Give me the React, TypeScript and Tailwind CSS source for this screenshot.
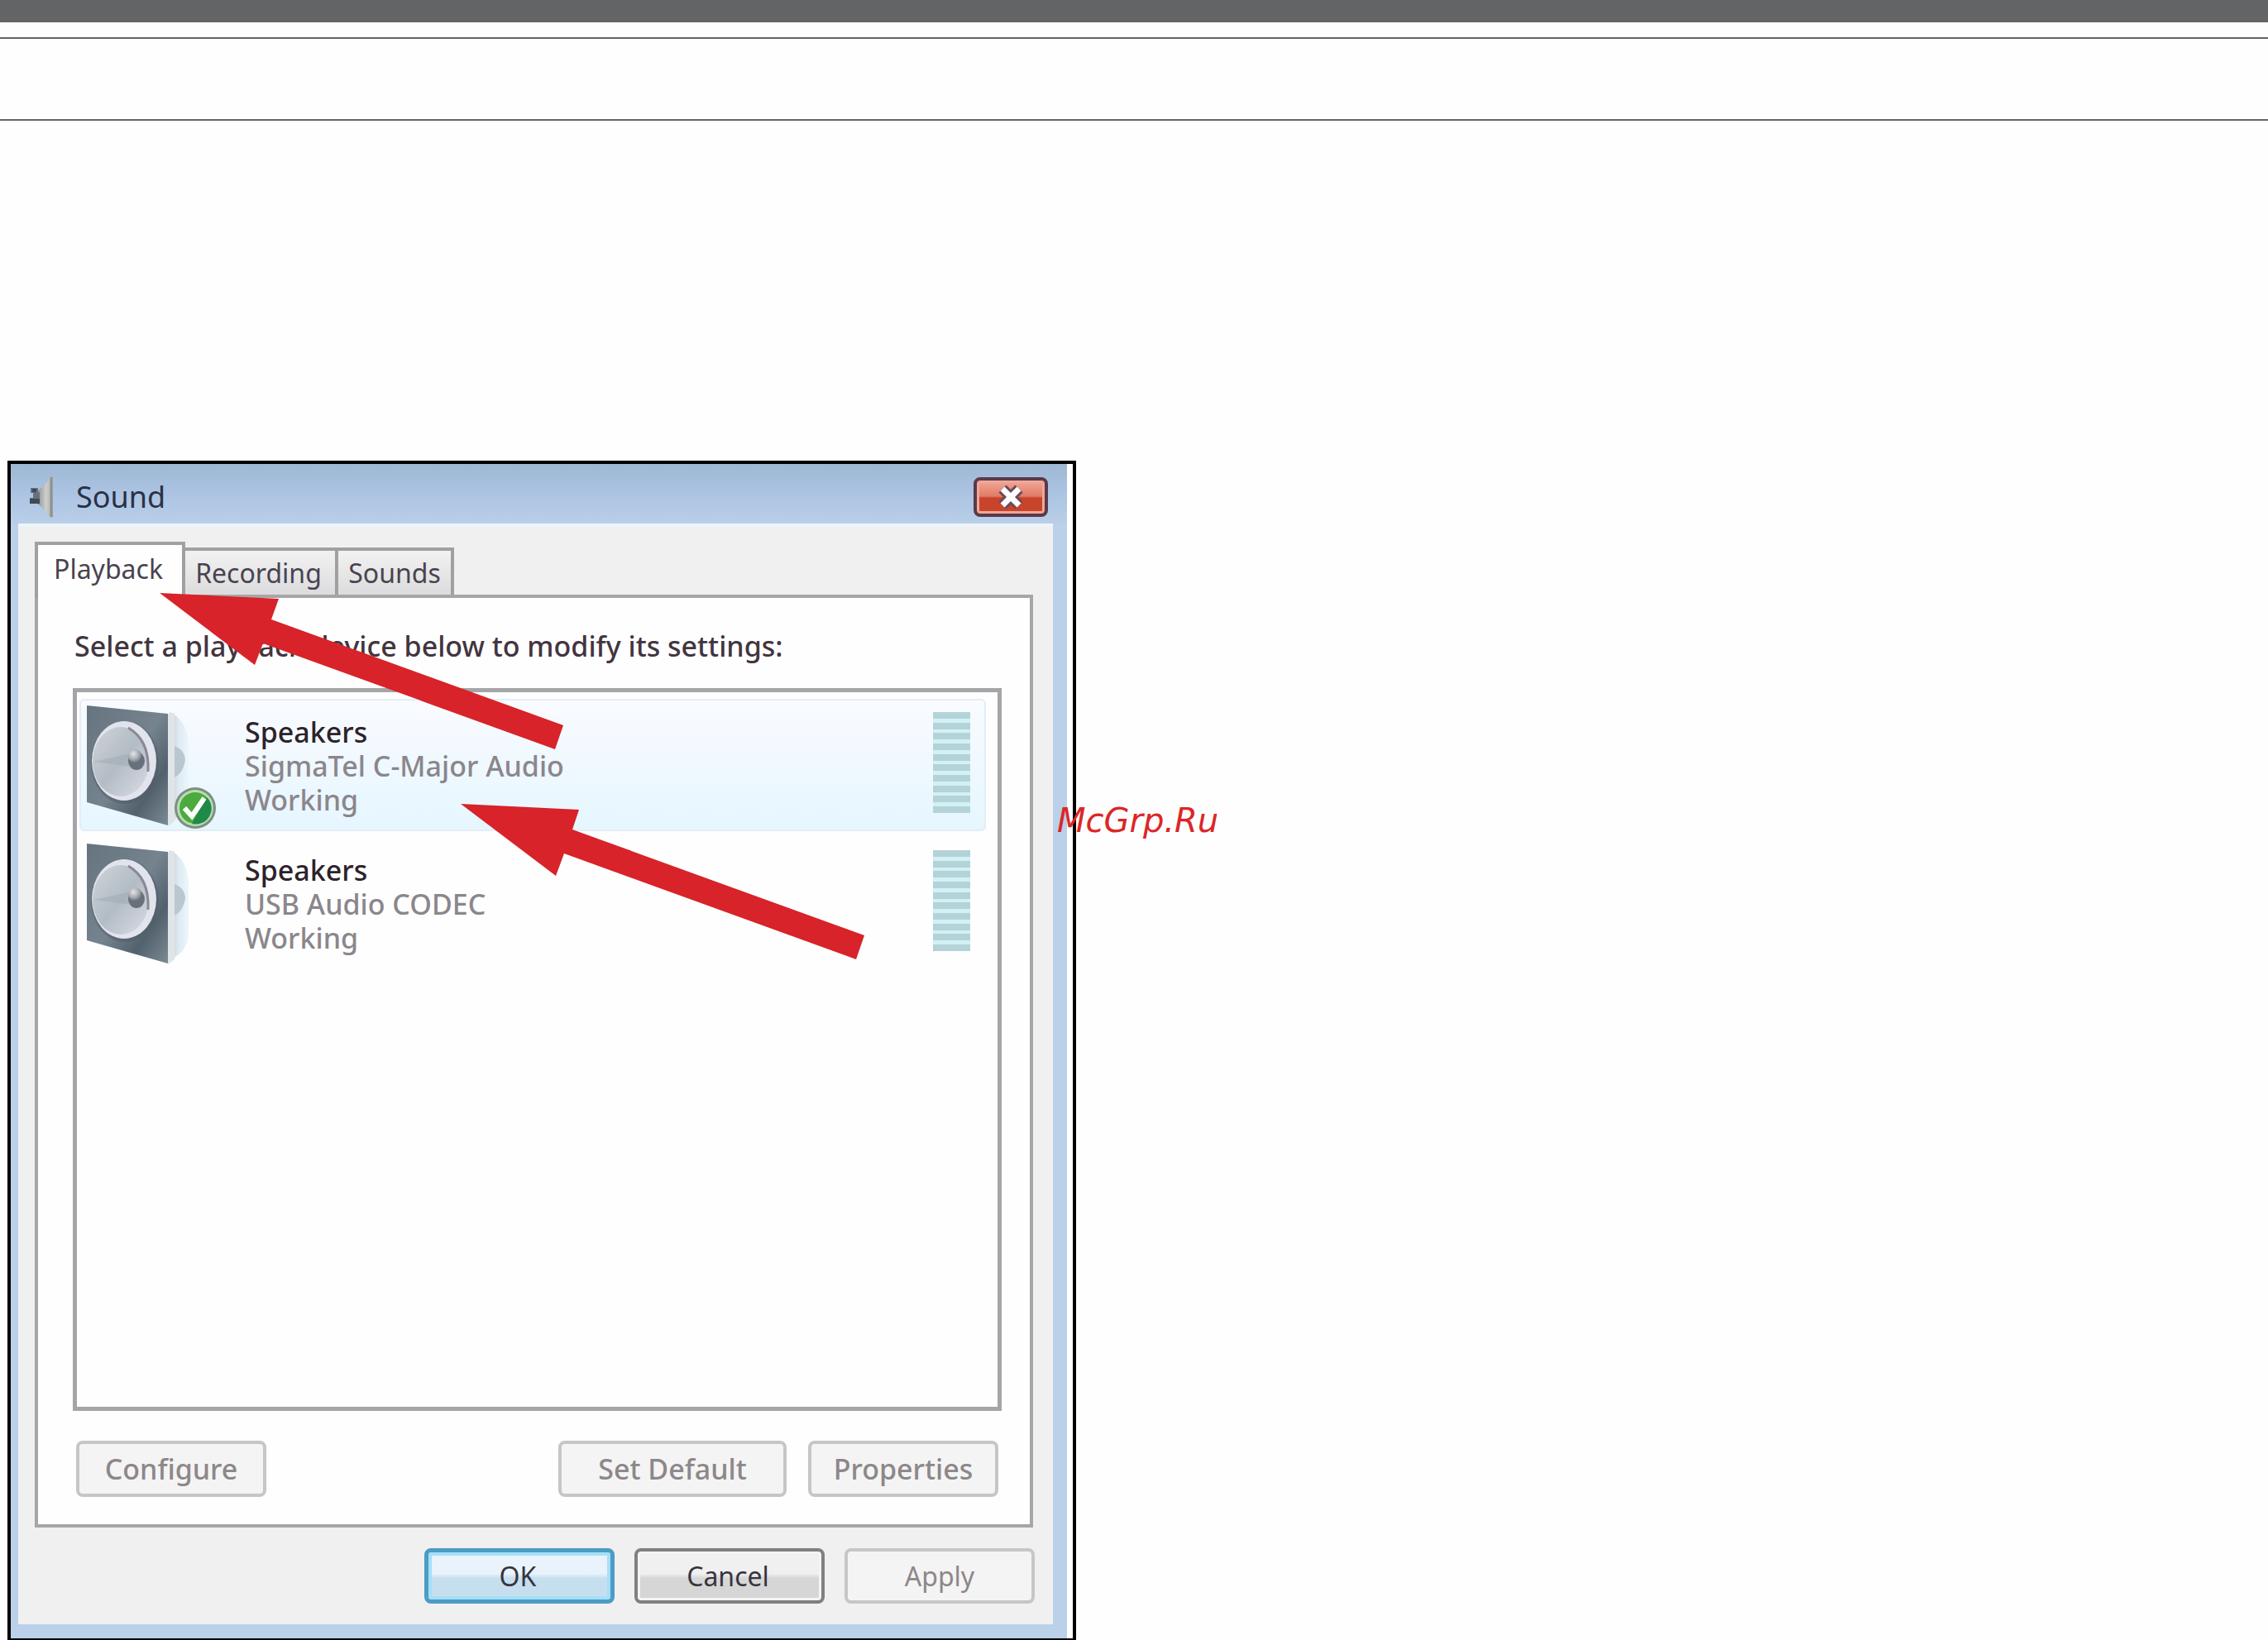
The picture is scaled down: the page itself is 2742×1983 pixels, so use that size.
import React from 'react';

const devices = [
    { id: 'sigmatel', name: 'Speakers', driver: 'SigmaTel C-Major Audio', status: 'Working', isDefault: true },
    { id: 'usb', name: 'Speakers', driver: 'USB Audio CODEC', status: 'Working', isDefault: false },
];

const TitleIcon = () => (
    <svg width="36" height="52" viewBox="0 0 36 52" aria-hidden="true">
        <defs>
            <linearGradient id="horn" x1="0" y1="0" x2="1" y2="0">
                <stop offset="0" stopColor="#7e858c" />
                <stop offset="0.6" stopColor="#cfcfca" />
                <stop offset="1" stopColor="#a9acab" />
            </linearGradient>
        </defs>
        <path d="M10 19 Q22 14 27 2 L31 1 V51 L27 50 Q20 38 10 33 Z" fill="url(#horn)" />
        <path d="M29 2 V50" stroke="#8d9296" strokeWidth="3" />
        <path d="M4 15 H13 V20 H15 V34 H3 V27 H7 V21 H4 Z" fill="#66717d" />
        <path d="M3 28 H15 V34 H3 Z" fill="#3f4a56" />
        <path d="M6 16 H11 V20 H6 Z" fill="#3f4a56" />
    </svg>
);

const SpeakerIcon = () => (
    <svg width="126" height="148" viewBox="0 0 126 148" aria-hidden="true">
        <defs>
            <linearGradient id="front" x1="0" y1="0" x2="1" y2="1">
                <stop offset="0" stopColor="#66747f" />
                <stop offset="0.5" stopColor="#75838f" />
                <stop offset="0.75" stopColor="#53616d" />
                <stop offset="1" stopColor="#7c8a94" />
            </linearGradient>
            <linearGradient id="side" x1="0" y1="0" x2="1" y2="0">
                <stop offset="0" stopColor="#c3d0d9" />
                <stop offset="0.5" stopColor="#dfeaf2" />
                <stop offset="1" stopColor="#ecf6fc" />
            </linearGradient>
            <linearGradient id="cone" x1="0" y1="0" x2="1" y2="1">
                <stop offset="0" stopColor="#cfd4d9" />
                <stop offset="0.5" stopColor="#b3bcc4" />
                <stop offset="1" stopColor="#dadde6" />
            </linearGradient>
            <radialGradient id="knob" cx="0.4" cy="0.35" r="0.7">
                <stop offset="0" stopColor="#e6e4e6" />
                <stop offset="0.6" stopColor="#a5abb1" />
                <stop offset="1" stopColor="#68717b" />
            </radialGradient>
        </defs>
        <path d="M100 8 Q122 18 123 48 V108 Q122 128 108 136 L100 144 Z" fill="url(#side)" />
        <path d="M103 48 Q118 52 119 66 Q116 84 103 88 Z" fill="#b9c7d1" />
        <path d="M0 0 L98 10 V145 L0 117 Z" fill="url(#front)" />
        <path d="M98 10 L106 9 V140 L98 146 Z" fill="#e1e4e6" />
        <ellipse cx="46" cy="69" rx="41" ry="50" fill="#4f5c67" opacity="0.5" />
        <ellipse cx="45" cy="67" rx="39" ry="48" fill="#e1e4ec" />
        <ellipse cx="41" cy="68" rx="34" ry="42" fill="url(#cone)" />
        <path d="M8 68 L54 58 V74 Z" fill="#9ea9b2" opacity="0.5" />
        <path d="M50 27 Q76 42 74 80" fill="none" stroke="#8a8797" strokeWidth="3" />
        <ellipse cx="60" cy="67" rx="10" ry="11" fill="#68717b" />
        <circle cx="58" cy="61" r="8" fill="url(#knob)" />
    </svg>
);

const DefaultBadge = () => (
    <svg className="absolute left-[112px] top-[104px]" width="52" height="52" viewBox="0 0 52 52" role="img" aria-label="Default device">
        <circle cx="26" cy="26" r="25" fill="#7c8f80" />
        <circle cx="26" cy="26" r="22" fill="#b9dcb4" />
        <circle cx="26" cy="26" r="19" fill="#4bab3c" />
        <path d="M40 13 A19 19 0 0 1 22 45 Z" fill="#1f8a48" />
        <path d="M13 26 L22 36 L37 14" fill="none" stroke="#fff" strokeWidth="6" />
    </svg>
);

const LevelMeter = () => (
    <div className="flex h-[122px] w-[45px] flex-col justify-between bg-[#d3f1f4]">
        {Array.from({ length: 10 }, (_, i) => (
            <div key={i} className="h-[8px] bg-[#b4d3d8]" />
        ))}
    </div>
);

const Arrows = () => (
    <svg className="pointer-events-none absolute left-0 top-0 z-20" width="1284" height="700" viewBox="13 561 1284 700" aria-hidden="true">
        <path d="M193 717 L337 724 L328 749 L681 877 L671 906 L318 778 L308 804 Z" fill="#d72329" />
        <path d="M557 972 L700 979 L692 1003 L1045 1131 L1035 1160 L682 1032 L672 1059 Z" fill="#d72329" />
    </svg>
);

const disabledButton = 'h-[68px] rounded-[8px] border-4 border-[#c6c6c6] bg-[#f4f4f4] text-[34px] leading-[40px] text-[#8d8789]';

export default function App() {
    return (
        <div className="min-h-screen bg-[#fefefe] font-['Noto_Sans','Open_Sans',sans-serif]">
            <header>
                <div className="h-[27px] bg-[#636466]" />
                <div className="mt-[18px] h-[101px] border-y-2 border-[#636466]" />
            </header>

            <main className="pl-[9px] pt-[411px]">
                <section className="relative w-full max-w-[1292px] border-4 border-black bg-white pr-[7px]" aria-label="Sound">
                    <div className="bg-[#bbd0e9] pb-[17px] pl-[9px] pr-[17px]">
                        <div className="-ml-[9px] -mr-[17px] flex h-[72px] items-center bg-linear-to-b from-[#9db8d3] via-[#acc4e3] to-[#b9cfe8] pl-[20px] pr-[23px] pt-[8px]">
                            <TitleIcon />
                            <h1 className="ml-[23px] flex-1 text-[36px] leading-[48px] text-[#2b3145]">Sound</h1>
                            <button
                                aria-label="Close"
                                className="flex h-[48px] w-[90px] items-center justify-center rounded-[8px] border-4 border-[#5a3a4c] bg-linear-to-b from-[#f2a898] from-0% via-[#e07a66] via-48% to-[#c8452b] to-52% shadow-[inset_0_0_0_3px_#f0a798]"
                            >
                                <svg width="36" height="30" viewBox="0 0 36 30" aria-hidden="true">
                                    <path d="M8 5 L28 25 M28 5 L8 25" stroke="#6b4a5c" strokeWidth="13" />
                                    <path d="M8 5 L28 25 M28 5 L8 25" stroke="#fff" strokeWidth="7" />
                                </svg>
                            </button>
                        </div>

                        <div className="border-t-4 border-[#eef4fb] bg-[#f0f0f0] pb-[25px] pl-[20px] pr-[22px] pt-[18px]">
                            <div className="flex items-end" role="tablist">
                                <button role="tab" aria-selected="true" className="relative z-10 -mb-[4px] h-[68px] w-[182px] border-4 border-b-0 border-[#a0a0a0] bg-[#fefefe] pb-[6px] pr-[4px] text-[32px] leading-[40px] text-[#4a4350]">
                                    Playback
                                </button>
                                <button role="tab" aria-selected="false" className="h-[57px] w-[185px] border-t-4 border-r-4 border-[#a0a0a0] bg-linear-to-b from-[#f2f2f2] to-[#dcdcde] pr-[4px] text-[32px] leading-[40px] text-[#4a4350]">
                                    Recording
                                </button>
                                <button role="tab" aria-selected="false" className="h-[57px] w-[140px] border-t-4 border-r-4 border-[#a0a0a0] bg-linear-to-b from-[#f2f2f2] to-[#dcdcde] text-[32px] leading-[40px] text-[#4a4350]">
                                    Sounds
                                </button>
                            </div>

                            <div role="tabpanel" className="mr-[2px] border-4 border-[#a6a6a6] bg-[#fefefe] pb-[33px] pl-[42px] pr-[34px] pt-[35px]">
                                <p className="ml-[2px] text-[34px] leading-[46px] font-medium text-[#43353f]">Select a playback device below to modify its settings:</p>

                                <ul className="mt-[28px] min-h-[874px] border-[5px] border-[#a3a5a8] bg-[#fefefe] pl-[3px] pr-[14px] pt-[8px]">
                                    {devices.map((d) => (
                                        <li
                                            key={d.id}
                                            className={
                                                d.isDefault
                                                    ? 'relative mb-[7px] flex h-[160px] items-start rounded-[6px] border-2 border-[#e3edf5] bg-linear-to-b from-[#f9fbff] to-[#e6f6ff] pl-[7px] pr-[17px] pt-[6px]'
                                                    : 'relative flex h-[160px] items-start border-2 border-transparent pl-[7px] pr-[17px] pt-[6px]'
                                            }
                                        >
                                            <SpeakerIcon />
                                            {d.isDefault && <DefaultBadge />}
                                            <div className="ml-[65px] flex-1 pt-[12px] text-[34px] leading-[41px] font-medium text-[#8b868c]">
                                                <p className="text-[#2c232b]">{d.name}</p>
                                                <p>{d.driver}</p>
                                                <p>{d.status}</p>
                                            </div>
                                            <div className="pt-[8px]">
                                                <LevelMeter />
                                            </div>
                                        </li>
                                    ))}
                                </ul>

                                <div className="mt-[36px] flex gap-[26px] pl-[4px] pr-[4px]">
                                    <button disabled className={`${disabledButton} mr-auto w-[230px] font-medium`}>Configure</button>
                                    <button disabled className={`${disabledButton} w-[276px] font-medium`}>Set Default</button>
                                    <button disabled className={`${disabledButton} w-[230px] font-medium`}>Properties</button>
                                </div>
                            </div>

                            <div className="mt-[25px] flex justify-end gap-[24px]">
                                <button className="h-[67px] w-[230px] rounded-[8px] border-[5px] border-[#4c9cc4] bg-linear-to-b from-[#eaf3fb] from-45% to-[#c6dfee] to-55% pr-[4px] text-[32px] leading-[40px] text-[#38343f] shadow-[inset_0_0_0_4px_#a5e0f8]">
                                    OK
                                </button>
                                <button className="h-[67px] w-[230px] rounded-[8px] border-4 border-[#808080] bg-linear-to-b from-[#f0f0f0] from-45% to-[#d6d6d6] to-55% pr-[4px] text-[32px] leading-[40px] text-[#38343f] shadow-[inset_0_0_0_3px_#f4f4f4]">
                                    Cancel
                                </button>
                                <button disabled className="h-[67px] w-[230px] rounded-[8px] border-4 border-[#c6c6c6] bg-[#f4f4f4] text-[32px] leading-[40px] text-[#8d8789]">
                                    Apply
                                </button>
                            </div>
                        </div>
                    </div>

                    <Arrows />
                    <span className="absolute left-[1265px] top-[407px] font-['DejaVu_Sans',sans-serif] text-[40px] leading-[48px] text-[#dc2626] italic">McGrp.Ru</span>
                </section>
            </main>
        </div>
    );
}
